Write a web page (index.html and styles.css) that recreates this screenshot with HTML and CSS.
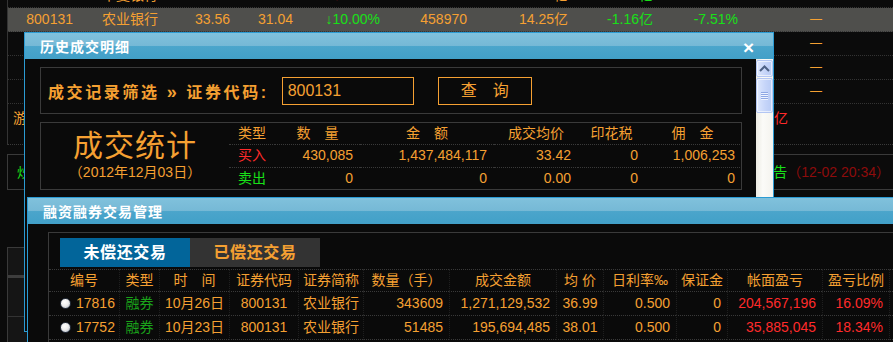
FILE: index.html
```html
<!DOCTYPE html>
<html lang="zh-CN">
<head>
    <meta charset="UTF-8">
    <meta name="viewport" content="width=device-width, initial-scale=1.0">
    <title>融资融券交易管理</title>
    <link rel="stylesheet" href="styles.css">
</head>
<body>
    <!-- background quote board -->
    <div class="board">
        <div class="market">
            <div class="q-row">
                <span>600015</span><span>华夏银行</span><span>10.28</span><span>10.01</span><span class="red">↑2.70%</span><span>215673</span><span>22.16亿</span><span class="green">-0.83亿</span><span class="green">-3.75%</span><span></span>
            </div>
            <div class="q-row sel">
                <span>800131</span><span>农业银行</span><span>33.56</span><span>31.04</span><span class="green">↓10.00%</span><span>458970</span><span>14.25亿</span><span class="green">-1.16亿</span><span class="green">-7.51%</span><span class="dash">—</span>
            </div>
            <div class="q-row">
                <span></span><span></span><span></span><span></span><span></span><span></span><span></span><span></span><span></span><span class="dash">—</span>
            </div>
            <div class="q-row">
                <span></span><span></span><span></span><span></span><span></span><span></span><span></span><span></span><span></span><span class="dash">—</span>
            </div>
            <div class="q-row">
                <span></span><span></span><span></span><span></span><span></span><span></span><span></span><span></span><span></span><span class="dash">—</span>
            </div>
            <div class="news-a">
                <span>游资动向：主力资金净流入</span><span class="red">3.25亿</span>
            </div>
        </div>
        <div class="news-b">
            <span class="green">炒股必读</span>
            <span><span class="green">农业银行停牌公告</span><span class="dim-red">（12-02 20:34）</span></span>
        </div>
        <div class="side-box">
            <div class="side-top"></div>
            <div class="side-bar"></div>
            <div class="side-mid"></div>
        </div>
    </div>

    <!-- history dialog -->
    <div class="dlg dlg-hist">
        <div class="dlg-title">
            <span>历史成交明细</span>
            <span class="close">×</span>
        </div>
        <div class="dlg-body">
            <div class="hist-content">
                <div class="filter">
                    <span class="filter-label">成交记录筛选 <b class="raquo">»</b> 证券代码:</span>
                    <div class="code-input">800131</div>
                    <div class="query-btn">查　询</div>
                </div>
                <div class="stats">
                    <div class="stats-head">
                        <div class="stats-title">成交统计</div>
                        <div class="stats-date">（2012年12月03日）</div>
                    </div>
                    <table class="stats-tbl">
                        <colgroup>
                            <col style="width:46px"><col style="width:85px"><col style="width:134px">
                            <col style="width:84px"><col style="width:67px"><col style="width:95px">
                        </colgroup>
                        <tr>
                            <th>类型</th><th>数　量</th><th>金　额</th><th>成交均价</th><th>印花税</th><th>佣　金</th>
                        </tr>
                        <tr>
                            <td class="red">买入</td><td>430,085</td><td>1,437,484,117</td><td>33.42</td><td>0</td><td>1,006,253</td>
                        </tr>
                        <tr>
                            <td class="green">卖出</td><td>0</td><td>0</td><td>0.00</td><td>0</td><td>0</td>
                        </tr>
                    </table>
                </div>
            </div>
            <div class="vscroll">
                <div class="sb-btn">
                    <svg width="11" height="7" viewBox="0 0 11 7"><path d="M1 6 L5.5 1.5 L10 6" fill="none" stroke="#4d6185" stroke-width="2"/></svg>
                </div>
                <div class="sb-thumb"><div class="grip"></div></div>
            </div>
        </div>
    </div>

    <!-- margin trading dialog -->
    <div class="dlg dlg-margin">
        <div class="dlg-title">
            <span>融资融券交易管理</span>
        </div>
        <div class="dlg-body margin-body">
            <div class="margin-box">
                <div class="tabs">
                    <div class="tab active">未偿还交易</div>
                    <div class="tab">已偿还交易</div>
                </div>
                <table class="trades">
                    <colgroup>
                        <col style="width:70px"><col style="width:40px"><col style="width:70px"><col style="width:69px">
                        <col style="width:65px"><col style="width:86px"><col style="width:107px"><col style="width:47px">
                        <col style="width:73px"><col style="width:51px"><col style="width:95px"><col style="width:67px">
                        <col style="width:40px">
                    </colgroup>
                    <tr>
                        <th>编号</th><th>类型</th><th>时　间</th><th>证券代码</th><th>证券简称</th><th>数量（手）</th>
                        <th>成交金额</th><th>均 价</th><th>日利率‰</th><th>保证金</th><th>帐面盈亏</th><th>盈亏比例</th><th></th>
                    </tr>
                    <tr>
                        <td class="id"><span class="radio"></span>17816</td><td class="c dgreen">融券</td><td class="c">10月26日</td>
                        <td class="c">800131</td><td class="c">农业银行</td><td class="r">343609</td><td class="r">1,271,129,532</td>
                        <td class="c">36.99</td><td class="r">0.500</td><td class="r">0</td><td class="r red">204,567,196</td>
                        <td class="r red">16.09%</td><td></td>
                    </tr>
                    <tr>
                        <td class="id"><span class="radio"></span>17752</td><td class="c dgreen">融券</td><td class="c">10月23日</td>
                        <td class="c">800131</td><td class="c">农业银行</td><td class="r">51485</td><td class="r">195,694,485</td>
                        <td class="c">38.01</td><td class="r">0.500</td><td class="r">0</td><td class="r red">35,885,045</td>
                        <td class="r red">18.34%</td><td></td>
                    </tr>
                </table>
            </div>
        </div>
    </div>
</body>
</html>
```

FILE: styles.css
```css
* {
    margin: 0;
    padding: 0;
    box-sizing: border-box;
}

body {
    width: 893px;
    height: 342px;
    overflow: hidden;
    position: relative;
    background: #0b0b0b;
    font-family: "Liberation Sans", "Noto Sans CJK SC", sans-serif;
    font-size: 14px;
    color: #f5a032;
}

.red { color: #ff2a2a; }
.green { color: #18e018; }
.dgreen { color: #1aa31a; }
.dim-red { color: #8e0c0c; }

/* background board */
.market {
    margin-top: -16px;
    margin-left: 7px;
    border-left: 1px solid #343434;
}

.q-row {
    display: grid;
    grid-template-columns: 65px 85px 72px 63px 87px 87px 101px 85px 85px 84px 1fr;
    height: 24px;
    line-height: 23px;
    border-bottom: 1px dotted #333;
}

.q-row span {
    text-align: right;
    white-space: nowrap;
}

.q-row.sel {
    background: #4f4f4c;
}

.q-row .dash {
    font-size: 12px;
}

.news-a {
    height: 41px;
    display: flex;
    justify-content: space-between;
    padding: 3px 105px 0 5px;
    line-height: 23px;
    border-bottom: 1px dotted #3a3a3a;
}

.news-b {
    margin: 9px 0 0 7px;
    height: 36px;
    display: flex;
    justify-content: space-between;
    padding: 0 3px 0 9px;
    line-height: 34px;
    border: 1px solid #3a3a3a;
    border-right: none;
    white-space: nowrap;
}

.side-box {
    margin: 57px 0 0 7px;
    border-top: 1px solid #3a3a3a;
    border-left: 1px solid #3a3a3a;
    background: #151515;
    height: 100px;
}

.side-top { height: 27px; }
.side-bar { height: 3px; background: #3d3d3d; }
.side-mid { height: 39px; border-bottom: 1px solid #333; }

/* dialogs */
.dlg {
    position: absolute;
    border: 1px solid #2b9bd3;
    background: #0a0a0a;
    display: flex;
    flex-direction: column;
}

.dlg-hist {
    left: 24px;
    top: 32px;
    width: 750px;
    height: 300px;
    z-index: 1;
}

.dlg-margin {
    left: 27px;
    top: 197px;
    width: 880px;
    height: 160px;
    z-index: 2;
}

.dlg-title {
    height: 26px;
    flex: none;
    display: flex;
    align-items: center;
    justify-content: space-between;
    padding: 0 19px 0 15px;
    background: linear-gradient(#80c1dc, #76b9d6 48%, #4ba5cb 52%, #42a0c8);
    color: #fff;
    font-weight: bold;
    font-size: 14px;
    letter-spacing: 1px;
}

.close {
    font-size: 19px;
    line-height: 1;
    letter-spacing: 0;
    margin-top: 2px;
}

.dlg-body {
    flex: 1;
    display: flex;
    min-height: 0;
}

.hist-content {
    flex: 1;
    padding: 8px 14px 0 15px;
}

.filter {
    height: 47px;
    border: 1px solid #3a3a3a;
    display: flex;
    align-items: center;
    padding-left: 7px;
    font-size: 16px;
}

.filter-label {
    font-weight: bold;
    letter-spacing: 2.6px;
}

.raquo {
    font-size: 18px;
}

.code-input {
    margin-left: 13px;
    width: 132px;
    height: 28px;
    border: 1px solid #f5a032;
    line-height: 26px;
    padding-left: 5px;
}

.query-btn {
    margin-left: 24px;
    width: 94px;
    height: 28px;
    border: 1px solid #f5a032;
    line-height: 26px;
    text-align: center;
}

.stats {
    margin-top: 8px;
    height: 68px;
    border: 1px solid #3a3a3a;
    display: flex;
}

.stats-head {
    width: 188px;
    display: flex;
    flex-direction: column;
    align-items: center;
    justify-content: center;
}

.stats-title {
    font-size: 30px;
    line-height: 34px;
    letter-spacing: 1px;
}

.stats-date {
    line-height: 18px;
    margin-bottom: 2px;
}

.stats-tbl {
    border-collapse: separate;
    border-spacing: 0;
    table-layout: fixed;
    width: 511px;
}

.stats-tbl th {
    font-weight: normal;
    line-height: 21px;
    text-align: center;
}

.stats-tbl td {
    line-height: 21px;
    border-top: 1px dotted #3a3a3a;
    text-align: right;
    padding-right: 7px;
}

.stats-tbl td:first-child {
    text-align: center;
    padding-right: 0;
}

.stats-tbl td:last-child {
    padding-right: 5px;
}

.vscroll {
    width: 17px;
    flex: none;
    display: flex;
    flex-direction: column;
    gap: 1px;
    padding-top: 1px;
    background: linear-gradient(90deg, #ecebe3, #fbfbf8 40%, #f4f3ee);
}

.sb-btn,
.sb-thumb {
    border: 1px solid #b3c6f3;
    border-radius: 2px;
    background: linear-gradient(90deg, #dde7fd, #c6d5f9 55%, #b8cbf5);
    box-shadow: inset 0 0 0 1px rgba(255, 255, 255, 0.6);
    display: flex;
    align-items: center;
    justify-content: center;
}

.sb-btn { height: 17px; }
.sb-thumb { height: 35px; }

.grip {
    width: 7px;
    height: 8px;
    background: repeating-linear-gradient(#8ea7e4 0 1px, #eef3ff 1px 2px);
}

/* margin trading */
.margin-body {
    padding: 8px 0 0 20px;
}

.margin-box {
    flex: 1;
    border-top: 1px solid #3a3a3a;
    border-left: 1px solid #3a3a3a;
    padding-top: 5px;
}

.tabs {
    display: flex;
    margin-left: 11px;
    margin-bottom: 2px;
}

.tab {
    width: 130px;
    height: 29px;
    line-height: 29px;
    text-align: center;
    font-size: 16px;
    font-weight: bold;
    letter-spacing: 0.6px;
    background: #333;
}

.tab.active {
    background: #02659a;
    color: #fff;
}

.trades {
    border-collapse: separate;
    border-spacing: 0;
    table-layout: fixed;
    width: 880px;
}

.trades th {
    font-weight: normal;
    line-height: 21px;
    text-align: center;
    border-top: 1px dotted #3a3a3a;
    white-space: nowrap;
}

.trades td {
    line-height: 23px;
    border-top: 1px dotted #3a3a3a;
    white-space: nowrap;
}

.trades tr:last-child td {
    border-bottom: 1px dotted #3a3a3a;
}

.trades th + th,
.trades td + td {
    border-left: 1px dotted #1f1f1f;
}

.trades .c { text-align: center; }
.trades .r { text-align: right; padding-right: 6px; }

.trades .id {
    padding-left: 11px;
}

.radio {
    display: inline-block;
    width: 11px;
    height: 11px;
    margin-right: 5px;
    vertical-align: -1px;
    border-radius: 50%;
    border: 1px solid #2b3442;
    background: radial-gradient(circle at 40% 35%, #ffffff 0, #eeeeee 45%, #a6aebb 100%);
}
```
